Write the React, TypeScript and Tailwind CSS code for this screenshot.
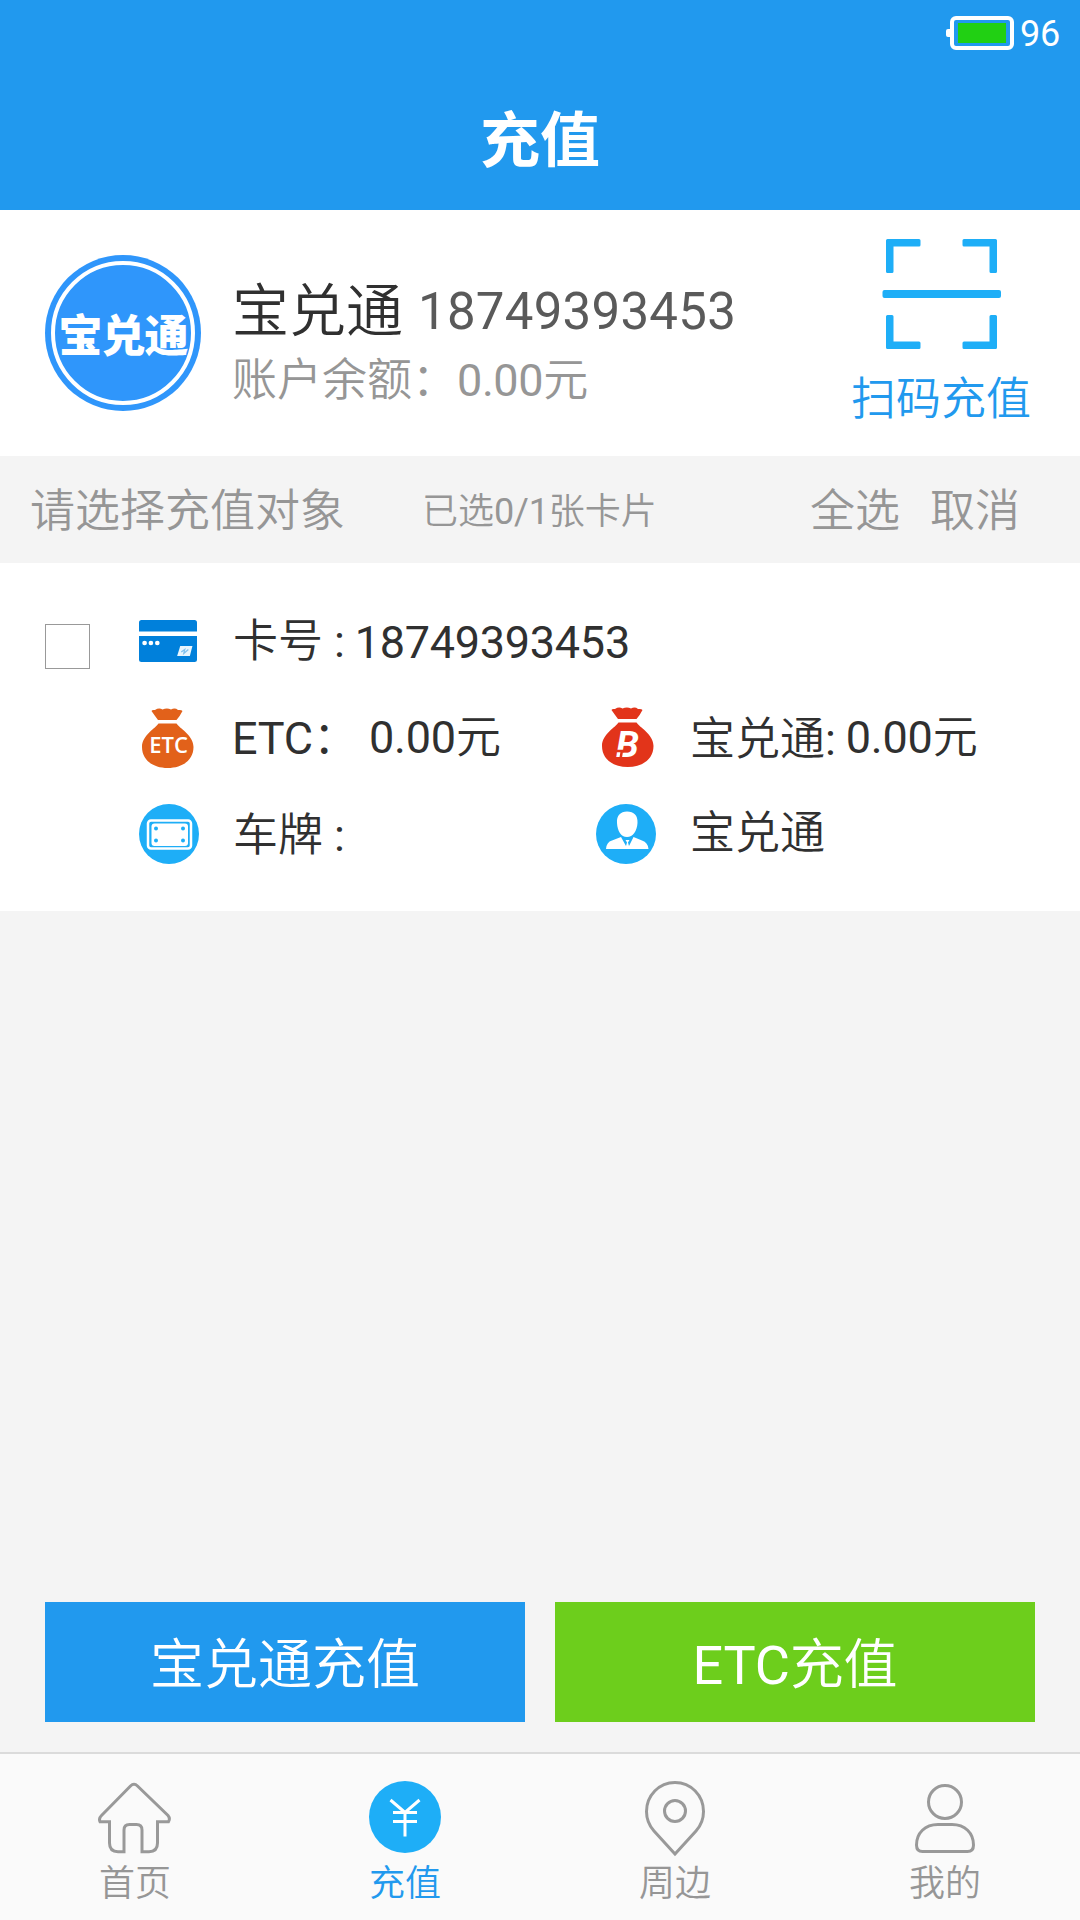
import React from "react";

const ScanIcon = () => (
  <svg width="120" height="112" viewBox="0 0 120 112" fill="#1eaef7">
    <path d="M4 2.5Q4 1 5.5 1H37Q38.5 1 38.5 2.5V7Q38.5 8.5 37 8.5H11.5V33.5Q11.5 35 10 35H5.5Q4 35 4 33.5Z" />
    <path d="M115 2.5Q115 1 113.5 1H82Q80.5 1 80.5 2.5V7Q80.5 8.5 82 8.5H107.5V33.5Q107.5 35 109 35H113.5Q115 35 115 33.5Z" />
    <path d="M4 109.5Q4 111 5.5 111H37Q38.5 111 38.5 109.5V105Q38.5 103.5 37 103.5H11.5V78.5Q11.5 77 10 77H5.5Q4 77 4 78.5Z" />
    <path d="M115 109.5Q115 111 113.5 111H82Q80.5 111 80.5 109.5V105Q80.5 103.5 82 103.5H107.5V78.5Q107.5 77 109 77H113.5Q115 77 115 78.5Z" />
    <rect x="0.5" y="52" width="118.5" height="8" rx="2" />
  </svg>
);

const CardIcon = () => (
  <svg width="58" height="42" viewBox="0 0 57 42" preserveAspectRatio="none">
    <path d="M0 11.5V2.5Q0 0 2.5 0H54.5Q57 0 57 2.5V11.5Z" fill="#0080db" />
    <path d="M0 16H57V39.5Q57 42 54.5 42H2.5Q0 42 0 39.5Z" fill="#0080db" />
    <circle cx="5.5" cy="23" r="2.3" fill="#fff" />
    <circle cx="11.7" cy="23" r="2.3" fill="#fff" />
    <circle cx="18" cy="23" r="2.3" fill="#fff" />
    <path d="M40.5 26H52.5L50 36H37.5Z" fill="#e8f5fd" />
    <path d="M41.5 32L45 29.5L44 33.5L48.5 29.5" fill="none" stroke="#7fc0ee" strokeWidth="1.2" />
  </svg>
);

const BagIcon = ({
  color,
  children,
}: {
  color: string;
  children: React.ReactNode;
}) => (
  <svg width="52" height="60" viewBox="0 0 52 60">
    <path
      d="M9.5 3Q10 1.5 13 2Q17 -0.5 20.5 1.5Q25 -0.5 29 1.5Q33 -0.5 36 2Q39.5 1.5 40.5 3Q38 8 34.5 12H16Q13 8 9.5 3Z"
      fill={color}
    />
    <path
      d="M16.5 15.5H34.5C37 20 51.5 27 51.5 39C51.5 52.5 40 60 25.7 60C11.5 60 0 52.5 0 39C0 27 14 20 16.5 15.5Z"
      fill={color}
    />
    {children}
  </svg>
);

const PlateIcon = () => (
  <svg width="60" height="60" viewBox="0 0 60 60">
    <circle cx="30" cy="30" r="30" fill="#1eaef7" />
    <rect x="9" y="16.5" width="43" height="28" rx="3" fill="none" stroke="#fff" strokeWidth="2.5" />
    <rect x="12.5" y="19.5" width="36.5" height="22.5" rx="3" fill="#fff" />
    <g fill="#1eaef7">
      <circle cx="17" cy="24.5" r="2" />
      <circle cx="44" cy="24.5" r="2" />
      <circle cx="17" cy="36.5" r="2" />
      <circle cx="44" cy="36.5" r="2" />
    </g>
  </svg>
);

const OwnerIcon = () => (
  <svg width="60" height="60" viewBox="0 0 60 60">
    <circle cx="30" cy="30" r="30" fill="#1eaef7" />
    <path
      d="M31 7.5C38 7.5 42 11.5 41.5 19C41 27 37 33 31 33C25 33 21.5 27 21 19C20.5 11.5 24.5 7.5 31 7.5Z"
      fill="#fff"
    />
    <path
      d="M10 45Q10.5 38 16 36.5L25 33L30 42L31 38.5L29.5 36H33.5L32 38.5L33 42L37.5 33L46 36.5Q52 38.5 52.5 45Z"
      fill="#fff"
    />
  </svg>
);

const HomeIcon = () => (
  <svg width="74" height="76" viewBox="-1 0 74 76" fill="none" stroke="#999" strokeWidth="3">
    <path d="M31.5 5Q35 1.5 38.5 5L69 34.5Q71.5 37.5 69.5 40.7H58.5V62Q58.5 70.7 50 70.7H43V49Q43 43.5 37.5 43.5H30.5Q25 43.5 25 49V70.7H19Q10.5 70.7 10.5 62V40.7H1Q-0.5 37.5 2.5 34.5Z" />
  </svg>
);

const YenIcon = () => (
  <svg width="72" height="76" viewBox="0 0 72 76" fill="none">
    <circle cx="36" cy="36" r="36" fill="#1eaef7" />
    <path
      d="M21.5 19L36 31.5L50.5 19M36 31V55.5M24 31.5H48M24 40.5H48"
      stroke="#fff"
      strokeWidth="3"
    />
  </svg>
);

const PinIcon = () => (
  <svg width="72" height="76" viewBox="0 0 72 76" fill="none" stroke="#999" strokeWidth="3">
    <path d="M36 1.5C52 1.5 64.5 14.5 64.5 30.5C64.5 38.5 61.5 45 57 50L36 73L15 50C10.5 45 7.5 38.5 7.5 30.5C7.5 14.5 20 1.5 36 1.5Z" />
    <circle cx="36" cy="30" r="10.5" />
  </svg>
);

const MineIcon = () => (
  <svg width="72" height="76" viewBox="0 0 72 76" fill="none" stroke="#999" strokeWidth="3">
    <circle cx="36" cy="21" r="16.5" />
    <path d="M7.5 64C7.5 52 16 43.5 29 43.5H43C56 43.5 64.5 52 64.5 64C64.5 68 62.5 70.5 58.5 70.5H13.5C9.5 70.5 7.5 68 7.5 64Z" />
  </svg>
);

const tabs = [
  { label: "首页", icon: HomeIcon, active: false },
  { label: "充值", icon: YenIcon, active: true },
  { label: "周边", icon: PinIcon, active: false },
  { label: "我的", icon: MineIcon, active: false },
];

// latin text runs one step heavier than the chinese around it
const Latin = ({ children }: { children: React.ReactNode }) => (
  <span className="font-normal tracking-[-0.2px]">{children}</span>
);

const StatusBar = () => (
  <div className="flex h-[66px] items-center justify-end pr-5">
    <div className="h-2 w-1 rounded-l-xs bg-white" />
    <div className="h-[34px] w-16 rounded-md border-4 border-white px-1 py-[3px]">
      <div className="h-full w-full bg-[#21d013]" />
    </div>
    <span className="ml-1.5 pt-0.5 text-4xl leading-9 font-normal tracking-[-0.2px] text-white">
      96
    </span>
  </div>
);

const Profile = () => (
  <section className="flex h-[246px] bg-white pt-[45px] pl-[45px]">
    <div className="flex size-[156px] shrink-0 items-center justify-center rounded-full bg-[#2f96fb] p-1.5">
      <div className="flex size-full items-center justify-center rounded-full border-4 border-white">
        <span className="pt-2 text-[44px] font-black tracking-[-1px] whitespace-nowrap text-white">
          宝兑通
        </span>
      </div>
    </div>
    <div className="ml-[31px] flex w-[619px] flex-col pt-6">
      <div className="flex leading-[66px] text-[#303030]">
        <span className="text-[57px]">宝兑通</span>
        <span className="ml-[15px] text-[51px] font-normal tracking-[0.25px] text-[#5a5a5a]">
          18749393453
        </span>
      </div>
      <p className="pt-px text-[45px] leading-[70px] text-[#969696]">
        账户余额：
        <span className="font-normal tracking-[-0.4px]">0.00</span>元
      </p>
    </div>
    <button className="-mt-[17px] flex w-[180px] flex-col items-center">
      <div className="pl-px">
        <ScanIcon />
      </div>
      <span className="mt-5 text-[45px] leading-[60px] text-[#2199ee]">
        扫码充值
      </span>
    </button>
  </section>
);

const SelectBar = () => (
  <section className="flex h-[107px] items-center pt-1 pr-[60px] pl-[30px] text-[45px] text-[#969696]">
    <span className="w-[392px]">请选择充值对象</span>
    <span className="text-4xl">
      已选<Latin>0/1</Latin>张卡片
    </span>
    <span className="ml-auto">全选</span>
    <span className="ml-[30px]">取消</span>
  </section>
);

const CardItem = () => (
  <section className="flex h-[348px] bg-white pl-[45px] text-[45px] leading-[60px] text-[#303030]">
    <div className="mt-[61px] size-[45px] border border-[#999]" />
    <div className="ml-[49px] flex w-[900px] flex-col pt-[47px]">
      <div className="flex h-[97px]">
        <div className="w-[94px] pt-[10px]">
          <CardIcon />
        </div>
        <span className="mt-0.5">
          卡号<Latin> :</Latin>
        </span>
        <span className="mt-[3px] ml-2.5 font-normal tracking-[-0.27px]">
          18749393453
        </span>
      </div>
      <div className="flex h-[96px]">
        <div className="w-[93px] pt-px pl-[3px]">
          <BagIcon color="#e2611a">
            <text
              x="26.5"
              y="44.5"
              textAnchor="middle"
              fontFamily="Open Sans"
              fontSize="22"
              fontWeight="600"
              fill="#fff"
            >
              ETC
            </text>
          </BagIcon>
        </div>
        <div className="flex w-[364px]">
          <span className="mt-0.5">
            <Latin>ETC</Latin>：
          </span>
          <span className="mt-px ml-[11px]">
            <Latin>0.00</Latin>元
          </span>
        </div>
        <div className="w-[94px] pl-1.5">
          <BagIcon color="#e2341a">
            <text
              x="25.5"
              y="50"
              textAnchor="middle"
              fontFamily="Roboto"
              fontStyle="italic"
              fontSize="37"
              fontWeight="700"
              fill="#fff"
            >
              B
            </text>
            <path d="M11 44H22M20 43L18.5 52" stroke="#e2341a" strokeWidth="2.5" />
          </BagIcon>
        </div>
        <span className="mt-[3px]">
          宝兑通<Latin>:</Latin>
        </span>
        <span className="mt-px ml-2.5">
          <Latin>0.00</Latin>元
        </span>
      </div>
      <div className="flex">
        <div className="w-[94px] pt-px">
          <PlateIcon />
        </div>
        <span className="mt-[3px] w-[363px]">
          车牌<Latin> :</Latin>
        </span>
        <div className="w-[94px] pt-px">
          <OwnerIcon />
        </div>
        <span className="mt-px">宝兑通</span>
      </div>
    </div>
  </section>
);

const TabBar = () => (
  <nav className="flex h-[168px] border-t-2 border-[#dbdbdb] bg-[#fafafa]">
    {tabs.map(({ label, icon: Icon, active }) => (
      <div key={label} className="flex flex-1 flex-col items-center pt-[27px]">
        <Icon />
        <span
          className={
            active
              ? "text-4xl leading-[54px] text-[#2199ee]"
              : "text-4xl leading-[54px] text-[#969696]"
          }
        >
          {label}
        </span>
      </div>
    ))}
  </nav>
);

const App = () => {
  return (
    <div className="flex h-[1920px] w-[1080px] flex-col overflow-hidden bg-[#f4f4f4] font-[Roboto,'Noto_Sans_CJK_SC',sans-serif] font-[350]">
      <header className="h-[210px] bg-[#2199ee]">
        <StatusBar />
        <h1 className="pt-1 text-center text-6xl leading-[144px] font-bold text-white">
          充值
        </h1>
      </header>
      <Profile />
      <SelectBar />
      <CardItem />
      <div className="mt-auto flex gap-[30px] px-[45px] pb-[30px] text-[54px] text-white">
        <button className="h-[120px] flex-1 bg-[#2199ee] pt-1.5">
          宝兑通充值
        </button>
        <button className="h-[120px] flex-1 bg-[#6dce1c] pt-1.5">
          <Latin>ETC</Latin>充值
        </button>
      </div>
      <TabBar />
    </div>
  );
};

export default App;
